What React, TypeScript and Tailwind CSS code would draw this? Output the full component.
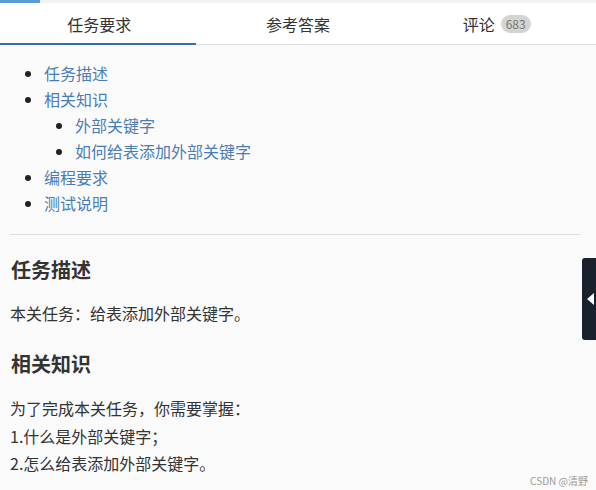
const tocLink = 'text-[#4a7db5]';

export default function App() {
  return (
    <div
      className="relative h-[490px] w-[596px] overflow-hidden bg-[#fafafa] text-[#333]"
      style={{ fontFamily: '"Microsoft YaHei", "Noto Sans CJK SC", sans-serif' }}
    >
      {/* top progress strip */}
      <div className="h-[3px] bg-[#f2f2f2]">
        <div className="h-full w-[40px] bg-[#5b9bd5]" />
      </div>

      {/* tabs */}
      <div className="flex h-[42px] border-b border-[#dcdcdc] bg-white text-[16px]">
        <div className="relative flex flex-1 items-center justify-center text-[#333]">
          任务要求
          <span className="absolute bottom-[-1px] left-0 h-[2px] w-[196px] bg-[#3a6cad]" />
        </div>
        <div className="flex flex-1 items-center justify-center text-[#333]">参考答案</div>
        <div className="flex flex-1 items-center justify-center gap-[6px] text-[#333]">
          评论
          <span className="rounded-full bg-[#d4d4d4] px-[5px] text-[12px] leading-[18px] text-[#777]">683</span>
        </div>
      </div>

      {/* content */}
      <div className="pl-[10px] pr-[16px] pt-[15px]">
        <ul className="list-disc pl-[34px] text-[16px] leading-[26px] marker:text-[#222]">
          <li className={tocLink}>任务描述</li>
          <li className={tocLink}>
            相关知识
            <ul className="list-disc pl-[31px]">
              <li className={tocLink}>外部关键字</li>
              <li className={tocLink}>如何给表添加外部关键字</li>
            </ul>
          </li>
          <li className={tocLink}>编程要求</li>
          <li className={tocLink}>测试说明</li>
        </ul>

        <div className="mt-[18px] h-[1px] bg-[#dedede]" />

        <h2 className="mt-[21px] pl-[1px] text-[20px] font-bold leading-[28px] text-[#333]">任务描述</h2>
        <p className="mt-[16px] text-[16px] leading-[27px]">本关任务：给表添加外部关键字。</p>

        <h2 className="mt-[23px] pl-[1px] text-[20px] font-bold leading-[28px] text-[#333]">相关知识</h2>
        <div className="mt-[17px] text-[16px] leading-[27.5px]">
          <p>为了完成本关任务，你需要掌握：</p>
          <p>1.什么是外部关键字；</p>
          <p>2.怎么给表添加外部关键字。</p>
        </div>
      </div>

      {/* side toggle */}
      <div className="absolute right-0 top-[258px] flex h-[82px] w-[14px] items-center justify-end rounded-l-[3px] bg-[#18212c]">
        <svg width="8" height="12" viewBox="0 0 8 12" className="mr-[2px]">
          <path d="M8 0 L1 6 L8 12 Z" fill="#fff" />
        </svg>
      </div>

      {/* watermark */}
      <div className="absolute bottom-[2px] right-[8px] text-[10px] text-[#9a9a9a]">CSDN @清野</div>
    </div>
  );
}
